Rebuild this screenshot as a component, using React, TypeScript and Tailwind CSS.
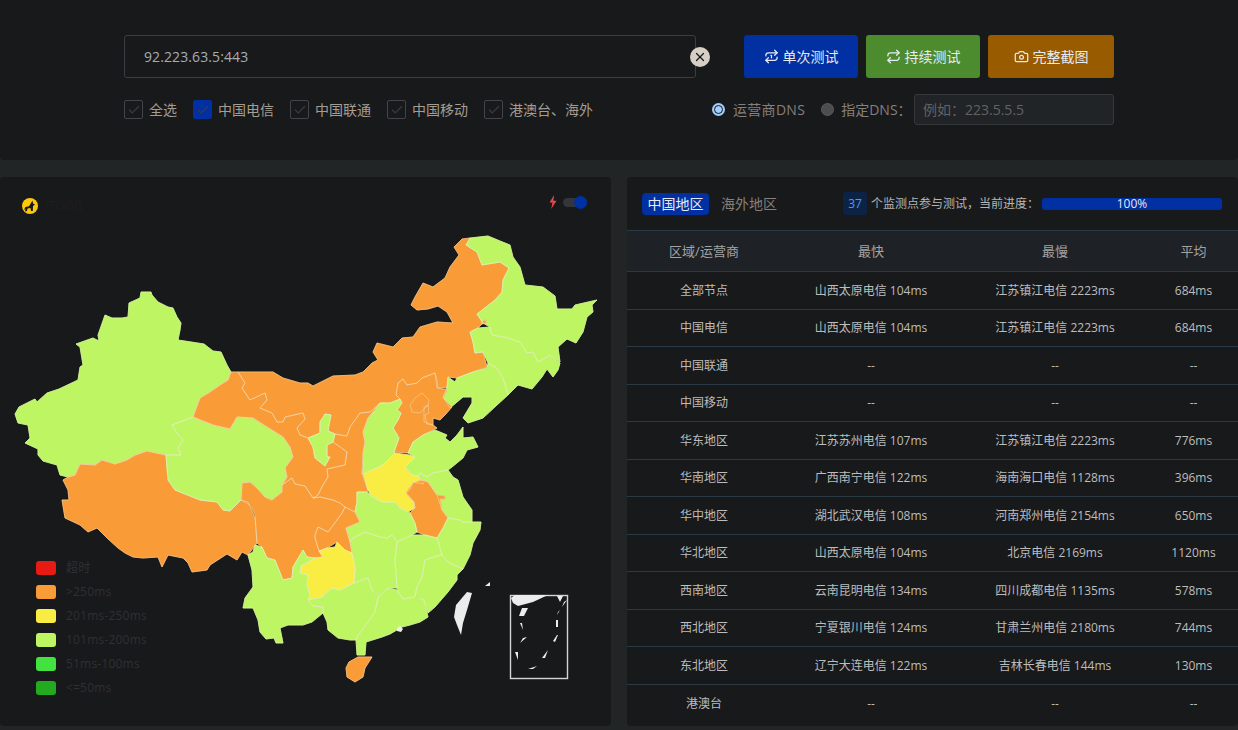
import { Camera, Check, Repeat, Repeat1, X } from "lucide-react";

const GREEN = "#bef663";
const ORANGE = "#f99b36";
const YELLOW = "#f9ed43";

// province outlines, in panel coordinates of the picture
const provinces: [string, string][] = [
  [GREEN, "141,292 151,292 152,295 158,302 168,307 173,308 177,317 181,323 180,330 178,340 204,344 213,351 221,352 227,365 231,372 228,380 220,385 210,392 200,398 193,417 172,425 177,433 183,440 178,448 181,455 166,455 147,451 135,455 127,460 115,464 102,460 95,465 80,464 75,475 68,477 60,475 57,465 43,461 38,455 38,449 25,443 30,438 28,425 18,423 15,414 19,407 35,399 37,402 47,393 59,389 78,380 80,367 83,365 80,347 76,344 93,338 99,341 98,335 105,315 112,318 122,318 128,317 129,303 140,298"],
  [ORANGE, "166,455 168,480 175,490 200,500 217,502 223,510 230,511 241,500 248,502 255,518 257,543 248,555 242,552 237,560 227,554 210,565 207,570 192,572 188,563 183,558 168,555 162,567 158,557 143,558 133,557 125,553 118,548 107,538 97,528 88,532 80,525 65,518 62,500 69,500 68,490 63,480 68,477 75,475 80,464 95,465 102,460 115,464 127,460 135,455 147,451"],
  [GREEN, "172,425 193,417 213,425 230,429 237,417 253,418 267,427 283,437 290,447 293,457 285,468 287,477 282,485 282,492 272,500 265,497 257,488 250,482 242,483 241,500 230,511 223,510 217,502 200,500 175,490 168,480 166,455 181,455 178,448 183,440 177,433"],
  [ORANGE, "193,417 200,398 210,392 220,385 228,380 231,372 238,372 245,383 242,388 250,400 265,393 267,400 260,408 272,413 277,422 283,422 285,417 303,413 305,419 297,428 300,435 308,438 313,447 315,458 325,466 330,457 327,457 327,445 333,442 347,452 345,465 327,469 328,477 323,485 318,495 313,498 305,486 295,484 292,478 282,485 287,477 285,468 293,457 290,447 283,437 267,427 253,418 237,417 230,429 213,425"],
  [ORANGE, "238,372 273,372 283,378 300,383 308,383 313,386 333,376 355,375 363,372 372,363 378,360 373,352 377,343 393,347 402,338 413,337 420,327 437,322 453,323 447,312 438,306 428,309 417,310 411,305 415,297 423,283 433,287 445,278 450,267 459,255 454,247 462,239 470,238 466,245 477,252 482,265 500,262 509,268 503,280 502,292 495,300 477,314 483,323 478,328 470,332 473,342 475,353 483,352 487,367 473,372 457,378 448,377 447,388 437,388 435,373 422,378 417,383 407,385 403,379 398,383 396,395 400,399 390,403 380,403 370,412 360,413 350,427 347,436 335,434 328,431 329,425 331,415 325,414 320,422 320,433 308,438 300,435 297,428 305,419 303,413 285,417 283,422 277,422 272,413 260,408 267,400 265,393 250,400 242,388 245,383"],
  [GREEN, "470,238 488,236 500,241 510,245 513,257 520,267 525,285 543,287 555,296 557,309 572,309 575,305 597,300 592,305 593,312 587,317 583,332 576,343 567,339 558,347 560,362 550,355 538,362 533,352 527,353 520,342 508,338 492,335 490,327 483,323 477,314 495,300 502,292 503,280 509,268 500,262 482,265 477,252 466,245"],
  [ORANGE, "481,322 486,320 486,323 482,324"],
  [GREEN, "470,332 478,328 490,327 492,335 508,338 520,342 527,353 533,352 538,362 550,355 560,363 558,370 553,377 547,369 542,377 532,389 518,385 508,395 503,378 497,368 488,363 483,352 475,353 473,342"],
  [GREEN, "488,363 497,368 503,378 508,395 497,405 483,418 468,423 463,418 472,403 472,397 463,397 450,408 443,397 447,388 448,377 455,382 457,378 473,372 487,368"],
  [ORANGE, "396,395 398,383 403,379 407,385 417,383 422,378 435,373 437,380 438,388 447,390 443,398 452,407 445,415 440,420 433,418 433,425 437,428 423,435 413,442 408,453 394,452 399,438 393,428 398,420 401,413 397,410 402,403 400,399"],
  [ORANGE, "410,405 415,398 422,393 429,400 428,405 420,413 412,412"],
  [ORANGE, "424,407 428,405 429,413 425,415 427,424 433,425 424,422"],
  [GREEN, "400,399 402,403 397,410 401,413 398,420 393,428 399,438 394,452 395,453 383,465 377,468 362,474 363,467 363,453 365,442 363,432 368,418 380,403 390,403"],
  [ORANGE, "335,434 347,436 350,427 360,413 370,412 380,403 368,418 363,432 365,442 363,453 362,474 368,490 367,492 357,492 357,502 355,512 345,507 340,503 333,500 320,497 313,498 318,495 323,485 328,477 327,469 345,465 347,452 333,442"],
  [GREEN, "308,438 320,433 320,422 325,414 331,415 329,425 328,431 335,434 333,442 327,445 327,457 330,457 325,466 315,458 313,447"],
  [YELLOW, "395,453 409,455 415,457 405,467 412,475 418,476 424,484 413,482 410,490 406,493 414,502 415,508 408,512 400,508 395,502 382,502 372,497 368,490 363,474 377,468 383,465"],
  [GREEN, "435,430 447,435 445,438 450,442 457,435 463,427 463,438 473,437 478,447 467,450 463,458 452,467 448,470 433,473 427,477 420,473 418,476 412,475 405,467 415,457 408,453 413,442 423,435"],
  [GREEN, "427,477 433,473 448,470 453,477 458,480 463,497 472,510 472,522 463,522 460,520 448,518 442,510 437,495 428,482 422,480 418,476 420,473"],
  [ORANGE, "422,480 428,482 437,495 445,496 445,499 440,499 442,510 448,518 443,528 437,538 425,535 417,532 415,523 410,513 415,508 414,502 406,493 413,483"],
  [GREEN, "448,518 460,520 463,522 481,522 480,530 473,543 470,555 463,569 448,562 442,555 437,538 443,528"],
  [GREEN, "442,555 448,562 463,569 457,575 457,580 448,592 435,607 428,613 424,600 415,596 417,587 422,577 425,560 438,555"],
  [GREEN, "397,542 412,535 425,535 437,538 442,555 425,560 422,577 417,587 415,597 403,599 398,592 397,588 395,560"],
  [GREEN, "350,542 353,538 365,532 380,537 387,538 392,535 397,542 395,560 397,588 388,588 378,597 372,590 368,578 354,583 355,568 352,553"],
  [GREEN, "357,492 367,492 382,502 395,502 400,508 408,512 410,513 415,523 417,532 412,535 397,542 392,535 387,538 380,537 365,532 353,538 350,542 346,528 360,522 355,512 357,502"],
  [ORANGE, "315,535 318,527 328,532 337,520 342,513 345,507 355,512 360,522 346,528 350,542 352,553 345,550 337,542 327,548 319,551 315,538"],
  [ORANGE, "241,500 250,505 255,515 257,543 262,547 267,558 275,560 283,580 292,578 293,567 303,550 307,557 315,558 323,557 319,551 315,538 315,535 318,527 328,532 337,520 342,513 345,507 340,503 333,500 320,497 313,498 305,486 295,484 292,478 282,485 282,492 272,500 265,497 257,488 250,482 242,483"],
  [YELLOW, "337,542 345,550 352,553 355,568 354,583 340,590 332,588 322,597 308,600 310,595 307,585 308,575 300,573 301,566 315,558 323,557 319,551 327,548 335,547"],
  [GREEN, "255,545 262,547 267,558 275,560 283,580 292,578 293,567 303,550 307,557 315,558 301,566 300,573 308,575 307,585 310,595 308,600 313,606 323,607 323,613 312,622 303,625 288,625 280,628 283,643 276,643 274,638 266,639 260,632 258,620 253,608 243,608 245,598 253,587 252,570 248,555 253,552"],
  [GREEN, "308,600 322,597 332,588 340,590 354,583 368,578 372,590 378,598 375,612 368,622 357,637 356,640 350,640 338,638 328,630 327,622 323,613 323,607 313,606"],
  [GREEN, "378,597 388,588 397,590 403,599 415,597 424,600 428,617 420,622 410,625 402,627 390,634 382,637 366,642 365,655 357,655 356,640 357,637 368,622 375,612"],
  [ORANGE, "349,662 358,657 372,657 365,668 363,677 355,682 347,677 346,668"],
];

const islands = [
  "467,592 472,593 467,610 463,623 461,635 457,625 454,617 456,605",
  "397,628 400,626 403,629 401,632 397,631",
  "485,586 490,582 490,586",
];

const insetShapes = [
  "511,598 515,595 548,595 533,602 518,606 513,603",
  "557,596 563,596 560,602",
  "567,600 562,607 564,602",
  "522,608 528,608 524,616 519,616",
  "560,610 557,615 558,612",
  "556,620 558,620 558,627 556,627",
  "520,623 522,623 523,630",
  "520,643 527,637 523,638",
  "557,635 558,635 555,642 553,641",
  "548,650 545,658 542,658",
  "515,652 518,652 518,660",
  "528,669 537,666 533,669",
];

const legend = [
  ["#e81a14", "超时"],
  ["#f99b36", ">250ms"],
  ["#f9ed43", "201ms-250ms"],
  ["#bef663", "101ms-200ms"],
  ["#42e33f", "51ms-100ms"],
  ["#22ab1e", "<=50ms"],
];

const rows = [
  ["全部节点", "山西太原电信 104ms", "江苏镇江电信 2223ms", "684ms"],
  ["中国电信", "山西太原电信 104ms", "江苏镇江电信 2223ms", "684ms"],
  ["中国联通", "--", "--", "--"],
  ["中国移动", "--", "--", "--"],
  ["华东地区", "江苏苏州电信 107ms", "江苏镇江电信 2223ms", "776ms"],
  ["华南地区", "广西南宁电信 122ms", "海南海口电信 1128ms", "396ms"],
  ["华中地区", "湖北武汉电信 108ms", "河南郑州电信 2154ms", "650ms"],
  ["华北地区", "山西太原电信 104ms", "北京电信 2169ms", "1120ms"],
  ["西南地区", "云南昆明电信 134ms", "四川成都电信 1135ms", "578ms"],
  ["西北地区", "宁夏银川电信 124ms", "甘肃兰州电信 2180ms", "744ms"],
  ["东北地区", "辽宁大连电信 122ms", "吉林长春电信 144ms", "130ms"],
  ["港澳台", "--", "--", "--"],
];

const lines = [
  { label: "全选", on: false, w: "w-[69px]" },
  { label: "中国电信", on: true, w: "w-[97px]" },
  { label: "中国联通", on: false, w: "w-[97px]" },
  { label: "中国移动", on: false, w: "w-[97px]" },
  { label: "港澳台、海外", on: false, w: "" },
];

const Map = () => (
  <svg viewBox="0 177 611 549" className="block w-full h-full">
    {provinces.map(([fill, points], i) => (
      <polygon key={i} points={points} fill={fill} stroke={fill} strokeWidth={0.8} strokeLinejoin="round" />
    ))}
    {provinces.map(([, points], i) => (
      <polygon key={i} points={points} fill="none" stroke="#f1efd9" strokeOpacity={0.7} strokeWidth={0.6} strokeLinejoin="round" />
    ))}
    {islands.map((points) => (
      <polygon key={points} points={points} fill="#ececec" />
    ))}
    <rect x="510.5" y="595.5" width="57" height="83" fill="none" stroke="#d4d4d4" strokeWidth={1.4} />
    {insetShapes.map((points) => (
      <polygon key={points} points={points} fill="#ececec" />
    ))}
  </svg>
);

const App = () => {
  return (
    <div className="w-[1238px] h-[730px] overflow-hidden bg-[#212526] font-['Open_Sans','Noto_Sans_CJK_SC',sans-serif]">
      <div className="h-[160px] bg-[#18191b] rounded-b pt-[35px] pl-[124px] pr-[124px]">
        <div className="flex">
          <div className="w-[572px] h-[43px] border border-[#3c3d41] rounded-[3px] flex items-center justify-between pl-[19px] pr-0 relative">
            <span className="text-sm tracking-[0.1px] text-[#a8abb2]">92.223.63.5:443</span>
            <span className="absolute left-[565px] top-[11px] w-5 h-5 rounded-full bg-[#d5cfc6] flex items-center justify-center">
              <X size={14} strokeWidth={2.2} className="text-[#18191b]" />
            </span>
          </div>
          <div className="flex gap-2 ml-12">
            <button className="w-[114px] h-[43px] rounded-[3px] bg-[#0030a1] text-[#e5eaf3] text-sm flex items-center justify-center gap-1">
              <Repeat1 size={15} />
              单次测试
            </button>
            <button className="w-[114px] h-[43px] rounded-[3px] bg-[#4c8c2f] text-[#e5eaf3] text-sm flex items-center justify-center gap-1">
              <Repeat size={15} />
              持续测试
            </button>
            <button className="w-[126px] h-[43px] rounded-[3px] bg-[#995b00] text-[#e5eaf3] text-sm flex items-center justify-center gap-1">
              <Camera size={15} />
              完整截图
            </button>
          </div>
        </div>
        <div className="flex items-center mt-4 h-[31px]">
          <div className="flex items-center w-[588px]">
            {lines.map((l) => (
              <label key={l.label} className={`flex items-center gap-[6px] text-sm text-[#a39d92] ${l.w}`}>
                <span className={l.on ? "w-[19px] h-[19px] rounded-[2px] bg-[#0030a1] flex items-center justify-center" : "w-[19px] h-[19px] rounded-[2px] border border-[#434449] flex items-center justify-center"}>
                  <Check size={14} strokeWidth={2} className="text-[#3c3d41]" />
                </span>
                {l.label}
              </label>
            ))}
          </div>
          <span className="w-[13px] h-[13px] rounded-full bg-[#a0cfff] border-2 border-[#a0cfff] outline outline-1 outline-[#18191b] -outline-offset-[3px] ml-0" />
          <span className="ml-2 text-sm tracking-[0.3px] text-[#85807a]">运营商DNS</span>
          <span className="ml-4 w-[13px] h-[13px] rounded-full bg-[#4c4d4f] border border-[#5a5b5e]" />
          <span className="ml-[7px] text-sm text-[#85807a]">指定DNS：</span>
          <div className="ml-auto w-[200px] h-[31px] bg-[#202427] border border-[#36393c] rounded-[3px] flex items-center pl-2 text-sm text-[#606266]">
            例如：223.5.5.5
          </div>
        </div>
      </div>

      <div className="flex gap-4 mt-[17px] h-[549px]">
        <div className="relative w-[611px] bg-[#18191b] rounded overflow-hidden">
          <Map />
          <div className="absolute left-[22px] top-[21px] flex items-center gap-[7px]">
            <svg viewBox="0 0 16 16" className="w-4 h-4">
              <circle cx="8" cy="8" r="8" fill="#fcc90a" />
              <path d="M10.5 2.5 11 5.5 13 6.5 11 8 10.8 13 9 13 8.5 10 5.5 10.5 5 13 3 13.5 3.5 11 2 12 3.5 9 7 8.2 Z" fill="#18191b" />
            </svg>
            <span className="text-xs text-[#231c1a] tracking-wide">ITDOG</span>
          </div>
          <div className="absolute left-[548px] top-[18px] flex items-center gap-[5px]">
            <svg viewBox="0 0 10 14" className="w-[10px] h-[14px]">
              <path d="M6 0 1.5 7.5 4.5 7.5 3.2 14 8.5 5.8 5.4 5.8Z" fill="#e5484d" />
            </svg>
            <span className="relative block w-6 h-[9px] rounded-full bg-[#33353a]">
              <span className="absolute -right-0 -top-[2px] w-[13px] h-[13px] rounded-full bg-[#0030a1]" />
            </span>
          </div>
          <div className="absolute left-9 top-[379px] flex flex-col">
            {legend.map(([color, label]) => (
              <div key={label} className="flex items-center h-6 gap-[10px]">
                <span className="w-5 h-[14px] rounded-[3px]" style={{ backgroundColor: color }} />
                <span className="text-xs text-[#2f3033] tracking-[0.2px]">{label}</span>
              </div>
            ))}
          </div>
        </div>

        <div className="flex-1 bg-[#18191b] rounded overflow-hidden">
          <div className="h-[54px] flex items-center pl-[15px] border-b border-[#2b3945]">
            <span className="w-[67px] h-[22px] rounded bg-[#0030a1] text-[#e5eaf3] text-sm flex items-center justify-center">中国地区</span>
            <span className="ml-3 text-sm text-[#85807a]">海外地区</span>
            <span className="ml-[66px] w-6 h-[23px] rounded-[3px] bg-[#0d2346] text-[#4a9cf0] text-xs flex items-center justify-center">37</span>
            <span className="ml-1 text-xs text-[#b5b5b5]">个监测点参与测试，当前进度：</span>
            <div className="ml-[3px] w-[180px] h-3 rounded-[3px] bg-[#0030a1] text-[#e5eaf3] text-xs leading-3 text-center">100%</div>
          </div>
          <div className="grid grid-cols-[154px_180px_188px_1fr] h-[41px] pt-px items-center text-center text-[13px] text-[#a3a3a3] bg-[#1e2125] border-b border-[#2b3945]">
            <span>区域/运营商</span>
            <span>最快</span>
            <span>最慢</span>
            <span>平均</span>
          </div>
          {rows.map((r, i) => (
            <div key={i} className={`grid grid-cols-[154px_180px_188px_1fr] h-[37.5px] pt-px items-center text-center text-xs text-[#bdbdbd] ${i < rows.length - 1 ? "border-b border-[#2b3945]" : ""}`}>
              {r.map((c, j) => (
                <span key={j}>{c}</span>
              ))}
            </div>
          ))}
        </div>
      </div>
    </div>
  );
};

export default App;
